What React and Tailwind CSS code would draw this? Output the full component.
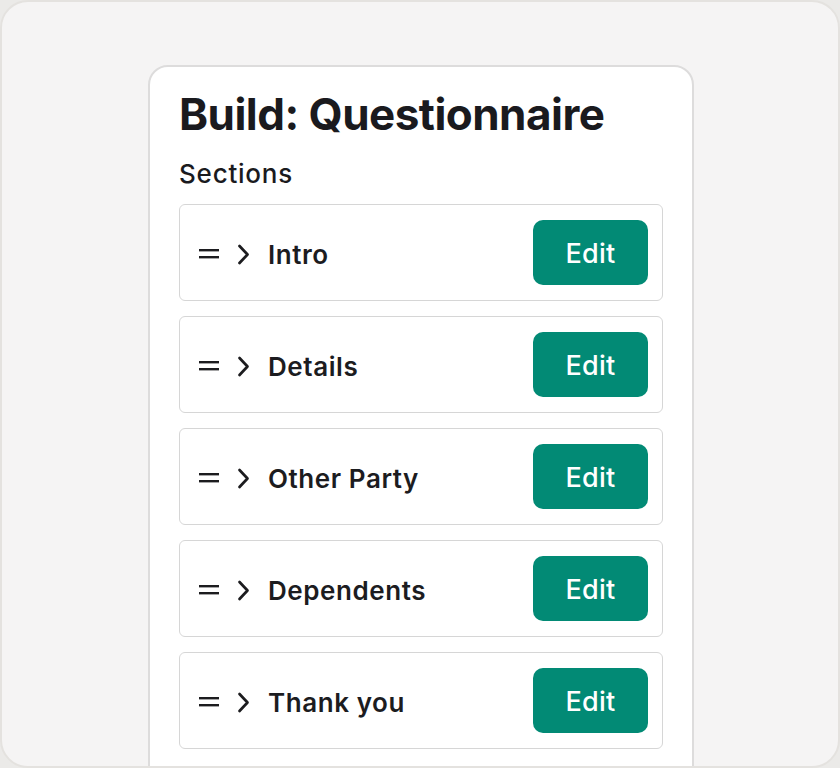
const sections = ['Intro', 'Details', 'Other Party', 'Dependents', 'Thank you']

function GripLines() {
  return (
    <svg width="20" height="10" viewBox="0 0 20 10" className="shrink-0">
      <rect x="0" y="0" width="20" height="2.4" fill="#1c1c1f" />
      <rect x="0" y="7" width="20" height="2.4" fill="#1c1c1f" />
    </svg>
  )
}

function Chevron() {
  return (
    <svg width="14" height="21" viewBox="0 0 14 21" className="shrink-0">
      <polyline
        points="2.5,2 10.5,10.5 2.5,19"
        fill="none"
        stroke="#1c1c1f"
        strokeWidth="2.7"
        strokeLinecap="round"
        strokeLinejoin="round"
      />
    </svg>
  )
}

function SectionRow({ name }) {
  return (
    <div className="flex h-[97px] items-center justify-between rounded-[6px] border border-[#d6d6d6] bg-white pl-[19px] pr-[14px]">
      <div className="flex items-center pt-[3px]">
        <GripLines />
        <span className="ml-[18px]">
          <Chevron />
        </span>
        <span className="ml-[17px] text-[26px] font-semibold tracking-[0.022em] text-[#1c1c1f]">{name}</span>
      </div>
      <button className="flex h-[65px] w-[115px] items-center justify-center rounded-[10px] bg-[#028a75] pt-[4px] text-[27px] font-medium tracking-[0.01em] text-white">
        Edit
      </button>
    </div>
  )
}

export default function App() {
  return (
    <div className="h-[768px] w-[840px] bg-[#ebeae8] font-['Inter',sans-serif]">
      <div className="h-full overflow-hidden rounded-[28px] border-2 border-[#e4e2df] bg-[#f5f4f4] pt-[63px] pl-[146px]">
        <div className="w-[546px] rounded-t-[20px] border-2 border-[#dddcdc] bg-white px-[29px] pt-[20px] pb-8">
          <h1 className="text-[44px] leading-tight font-bold tracking-[-0.012em] text-[#1a1a1e]">
            Build: Questionnaire
          </h1>
          <h2 className="mt-[12px] text-[26px] font-medium tracking-[0.03em] text-[#1a1a1e]">Sections</h2>
          <div className="mt-[11px] flex flex-col gap-[15px]">
            {sections.map((s) => (
              <SectionRow key={s} name={s} />
            ))}
          </div>
        </div>
      </div>
    </div>
  )
}
